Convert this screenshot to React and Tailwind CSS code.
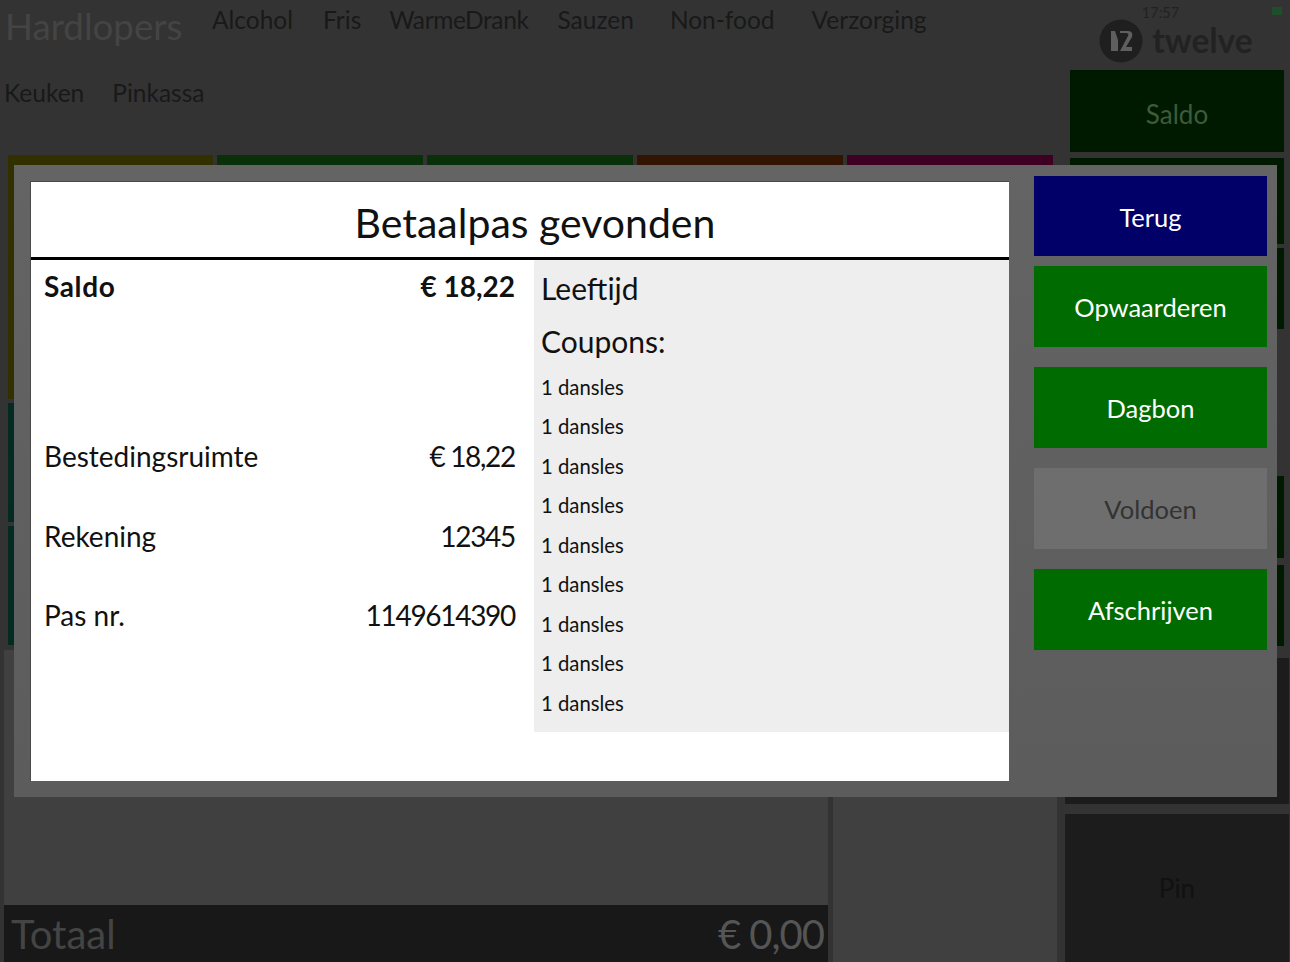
import React from "react";

const topNav = [
  { label: "Alcohol", className: "" },
  { label: "Fris", className: "ml-[30px]" },
  { label: "WarmeDrank", className: "ml-[28px] tracking-[-0.4px]" },
  { label: "Sauzen", className: "ml-[29px]" },
  { label: "Non-food", className: "ml-[36px]" },
  { label: "Verzorging", className: "ml-[37px]" },
];
const coupons = Array.from({ length: 9 }, () => "1 dansles");

const infoRows = [
  { label: "Bestedingsruimte", value: "€ 18,22" },
  { label: "Rekening", value: "12345" },
  { label: "Pas nr.", value: "1149614390" },
];

function Logo() {
  return (
    <div className="flex items-center gap-[9px]">
      <svg width="44" height="44" viewBox="0 0 44 44">
        <circle cx="22" cy="22" r="21.5" fill="#1f1f1f" />
        <path d="M12 12h4l3 9v11h-7z" fill="#5f5f5f" />
        <path d="M21 12h8c4 0 5 3 4 6l-6 10h6v4H21l8-15c1-2 0-3-2-3h-6z" fill="#5f5f5f" />
      </svg>
      <span className="text-[33.5px] font-bold leading-none text-[#222]">twelve</span>
    </div>
  );
}

function ModalButton({ label, className, textClass = "text-white" }) {
  return (
    <div className={`flex items-center justify-center pt-[2px] text-[25.5px] ${textClass} ${className}`}>
      {label}
    </div>
  );
}

function Modal() {
  return (
    <div className="absolute left-[14px] top-[165px] flex h-[632px] w-[1263px] bg-gradient-to-b from-[#646464] to-[#5c5c5c]">
      <div className="ml-4 mt-4 flex h-[600px] w-[979px] flex-col border-l border-t border-[#4a4a4a] bg-white text-[#111]">
        <div className="flex h-[78px] items-center justify-center border-b-[3px] border-black pl-[30px] pt-[6px] text-[41px]">
          Betaalpas gevonden
        </div>
        <div className="flex">
          <div className="w-[503px] pl-[13px] pr-[19px]">
            <div className="flex h-[156.5px] justify-between pt-[7px] text-[28px] font-bold leading-[38px]">
              <span className="tracking-[0.6px]">Saldo</span>
              <span>€ 18,22</span>
            </div>
            {infoRows.map((row) => (
              <div key={row.label} className="flex h-[79.5px] items-center justify-between text-[28px]">
                <span>{row.label}</span>
                <span className="tracking-[-1.3px]">{row.value}</span>
              </div>
            ))}
          </div>
          <div className="h-[472px] flex-1 bg-[#eeeeee] pl-[7px]">
            <div className="h-[53px] pt-[8px] text-[30px] leading-[40px]">Leeftijd</div>
            <div className="h-[46px] pt-[8px] text-[30px] leading-[40px]">Coupons:</div>
            <div className="mt-[-2px] pt-[10px]">
              {coupons.map((coupon, index) => (
                <div key={index} className="flex h-[39.5px] items-center text-[20.3px]">
                  {coupon}
                </div>
              ))}
            </div>
          </div>
        </div>
      </div>
      <div className="ml-[25px] mt-[11px] flex w-[233px] flex-col">
        <ModalButton label="Terug" className="h-[80px] bg-[#000068]" />
        <ModalButton label="Opwaarderen" className="mt-[10px] h-[81px] bg-[#006b00]" />
        <ModalButton label="Dagbon" className="mt-5 h-[81px] bg-[#006b00]" />
        <ModalButton label="Voldoen" className="mt-5 h-[81px] bg-[#6e6e6e]" textClass="text-[#333]" />
        <ModalButton label="Afschrijven" className="mt-5 h-[81px] bg-[#006b00]" />
      </div>
    </div>
  );
}

export default function App() {
  return (
    <div className="relative flex h-[962px] w-[1290px] overflow-hidden bg-[#333333] font-['Lato',sans-serif]">
      <div className="flex w-[1065px] flex-col">
        <div className="flex h-[70px] items-start pl-[5px]">
          <span className="w-[207px] pt-[4px] text-[36.7px] leading-[44px] text-[#444]">Hardlopers</span>
          <div className="flex pt-[3px] text-[24.5px] leading-[34px] text-[#191919]">
            {topNav.map((item) => (
              <span key={item.label} className={item.className}>{item.label}</span>
            ))}
          </div>
        </div>
        <div className="flex h-[85px] gap-[28px] pl-1 pt-[6px] text-[24.5px] leading-[34px] text-[#191919]">
          <span>Keuken</span>
          <span>Pinkassa</span>
        </div>
        <div className="flex h-[495px] gap-1 pl-2">
          <div className="flex w-[205px] flex-col gap-1">
            <div className="h-[244px] bg-[#333000]" />
            <div className="h-[119px] bg-[#032b22]" />
            <div className="h-[119px] bg-[#032b22]" />
          </div>
          <div className="h-[245px] w-[206px] bg-[#0a300a]" />
          <div className="h-[245px] w-[206px] bg-[#0a300a]" />
          <div className="h-[245px] w-[206px] bg-[#331400]" />
          <div className="h-[245px] w-[206px] bg-[#3d0022]" />
        </div>
        <div className="flex flex-1 pl-1">
          <div className="flex w-[824px] flex-col bg-[#404040]">
            <div className="flex-1" />
            <div className="flex h-[57px] items-center justify-between bg-[#181818] pl-[7px] pr-[4px] text-[40px] text-[#444]">
              <span>Totaal</span>
              <span className="tracking-[-1px] text-[#555]">€ 0,00</span>
            </div>
          </div>
          <div className="ml-[5px] w-[224px] bg-[#404040]" />
        </div>
      </div>

      <div className="flex flex-1 flex-col pr-[1px]">
        <div className="relative flex h-[70px] flex-col items-center">
          <span className="absolute left-[207px] top-[7px] h-2 w-[10px] bg-[#1f4f2a]" />
          <span className="mr-[33px] pt-[4px] text-[14.5px] leading-[18px] text-[#222]">17:57</span>
          <div className="ml-[-2px] mt-[-3px]">
            <Logo />
          </div>
        </div>
        <div className="flex flex-col px-[5px]">
          <div className="flex h-[82px] items-center justify-center bg-[#001a00] pt-[6px] text-[26px] text-[#3d5b3d]">Saldo</div>
          <div className="mt-[6px] h-[86px] bg-[#001a00]" />
          <div className="mt-[4px] h-[81px] bg-[#001a00]" />
          <div className="mt-[147px] h-[82px] bg-[#001a00]" />
          <div className="mt-[7px] h-[81px] bg-[#001a00]" />
        </div>
        <div className="mt-3 h-[146px] bg-[#1c1c1c]" />
        <div className="mt-[10px] flex flex-1 items-center justify-center bg-[#1c1c1c] text-[26px] text-[#111]">
          Pin
        </div>
      </div>

      <Modal />
    </div>
  );
}
